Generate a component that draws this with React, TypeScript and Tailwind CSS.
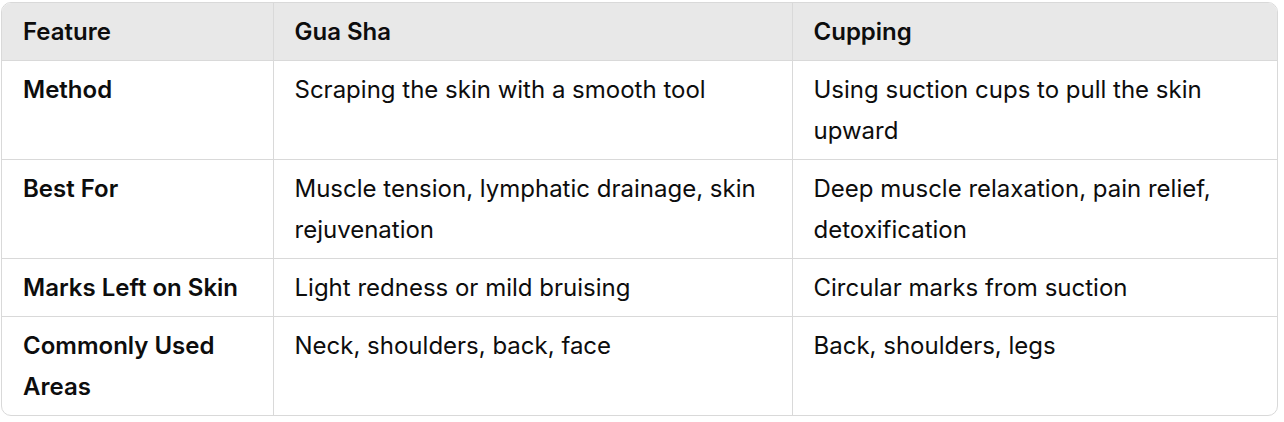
const rows = [
  {
    feature: "Method",
    guaSha: "Scraping the skin with a smooth tool",
    cupping: "Using suction cups to pull the skin upward",
  },
  {
    feature: "Best For",
    guaSha: "Muscle tension, lymphatic drainage, skin rejuvenation",
    cupping: "Deep muscle relaxation, pain relief, detoxification",
  },
  {
    feature: "Marks Left on Skin",
    guaSha: "Light redness or mild bruising",
    cupping: "Circular marks from suction",
  },
  {
    feature: "Commonly Used Areas",
    guaSha: "Neck, shoulders, back, face",
    cupping: "Back, shoulders, legs",
  },
];

export default function App() {
  return (
    <div className="w-[1284px] h-[422px] bg-white pl-px pt-[2px] font-['Inter',sans-serif] text-[#0d0d0d]">
      <div className="w-[1277px] overflow-hidden rounded-[10px] border border-[#d9d9d9]">
        <table className="w-full table-fixed border-collapse text-[24px] leading-[41px]">
          <colgroup>
            <col className="w-[271px]" />
            <col className="w-[519px]" />
            <col />
          </colgroup>
          <thead>
            <tr className="bg-[#e8e8e8]">
              <th className="border-r border-b border-[#d9d9d9] px-[21px] py-[8px] text-left font-semibold">
                Feature
              </th>
              <th className="border-r border-b border-[#d9d9d9] px-[21px] py-[8px] text-left font-semibold">
                Gua Sha
              </th>
              <th className="border-b border-[#d9d9d9] px-[21px] py-[8px] text-left font-semibold">
                Cupping
              </th>
            </tr>
          </thead>
          <tbody>
            {rows.map((row, i) => (
              <tr key={row.feature}>
                <td
                  className={`border-r border-[#d9d9d9] px-[21px] py-[8px] align-top font-semibold ${
                    i < rows.length - 1 ? "border-b" : ""
                  }`}
                >
                  {row.feature}
                </td>
                <td
                  className={`border-r border-[#d9d9d9] px-[21px] py-[8px] align-top ${
                    i < rows.length - 1 ? "border-b" : ""
                  }`}
                >
                  {row.guaSha}
                </td>
                <td
                  className={`border-[#d9d9d9] px-[21px] py-[8px] align-top ${
                    i < rows.length - 1 ? "border-b" : ""
                  }`}
                >
                  {row.cupping}
                </td>
              </tr>
            ))}
          </tbody>
        </table>
      </div>
    </div>
  );
}
